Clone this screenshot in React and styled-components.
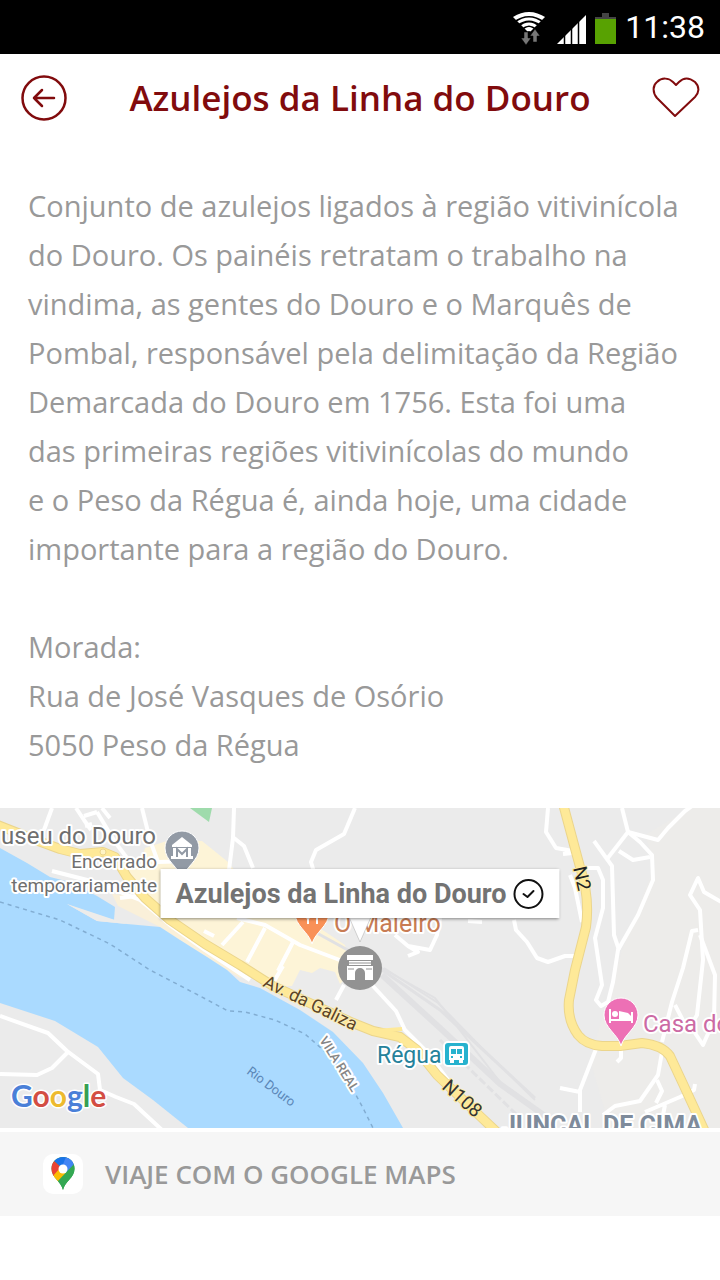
import React from "react"
import styled, { createGlobalStyle } from "styled-components"

const GlobalStyle = createGlobalStyle`
    * {
        box-sizing: border-box;
    }

    body {
        margin: 0;
        background: #fff;
        font-family: "Open Sans", "Noto Sans", sans-serif;
    }
`

const StatusBar = styled.div`
    display: flex;
    align-items: center;
    justify-content: flex-end;
    gap: 8px;
    height: 54px;
    padding: 0 15px;
    background: #000;
`

const Clock = styled.time`
    color: #fff;
    font: 400 32px/40px Roboto, sans-serif;
`

const Header = styled.header`
    display: flex;
    align-items: center;
    justify-content: space-between;
    min-height: 88px;
    padding: 0 20px;
`

const Title = styled.h1`
    margin: 0;
    color: #810b0d;
    font-size: 35px;
    font-weight: 600;
    line-height: 48px;
    text-align: center;
`

const IconButton = styled.button`
    display: flex;
    padding: 0;
    border: 0;
    background: none;
    color: #810b0d;
    cursor: pointer;
`

const Description = styled.section`
    padding: 39px 28px;
    color: #999;
    font-size: 29px;
    line-height: 49px;
`

const Paragraph = styled.p`
    margin: 0 0 49px;
`

const Address = styled.address`
    font-style: normal;
`

const MapArea = styled.section`
    position: relative;
    height: 320px;
    overflow: hidden;
    background: #ebebeb;
`

const MapDrawing = styled.svg`
    display: block;
    width: 100%;
    height: 100%;
    font-family: Roboto, sans-serif;
`

const Halo = styled.text`
    paint-order: stroke;
    stroke: ${props => props.$halo || "#fff"};
    stroke-width: ${props => props.$haloWidth || 4}px;
    stroke-linejoin: round;
`

const Callout = styled.button`
    position: absolute;
    top: 61px;
    left: 50%;
    transform: translateX(-50%);
    display: flex;
    align-items: center;
    gap: 6px;
    height: 49px;
    padding: 0 15px;
    border: 0;
    background: #fff;
    box-shadow: 0 1px 3px rgba(0, 0, 0, 0.45);
    color: #737373;
    font: 700 27px/32px Roboto, sans-serif;
    white-space: nowrap;
    cursor: pointer;
`

const MapsLink = styled.a`
    display: flex;
    align-items: center;
    gap: 22px;
    margin-top: 4px;
    height: 84px;
    padding: 0 43px;
    background: #f6f6f6;
    color: #999;
    font-size: 26px;
    font-weight: 600;
    text-decoration: none;
`

const MapsBadge = styled.span`
    display: flex;
    align-items: center;
    justify-content: center;
    width: 40px;
    height: 40px;
    border-radius: 10px;
    background: #fff;
`

function StatusIcons() {
    return (
        <svg width="104" height="54" viewBox="514 0 104 54" aria-hidden="true">
            <clipPath id="wifi">
                <path d="M530 33 L513 16 Q530 6 547 16Z" />
            </clipPath>
            <g clipPath="url(#wifi)" fill="none" stroke="#fff" strokeWidth="3">
                <path d="M513 20 Q530 8 547 20" strokeWidth="4" />
                <path d="M517 24 Q530 14 543 24" />
                <path d="M521 28 Q530 20 539 28" />
                <path d="M525 32 Q530 26 535 32" strokeWidth="4" />
            </g>
            <path d="M525 32h4v6h3l-5 7-5-7h3zM534 42v-6h-3l5-7 5 7h-3v6z" fill="#777" stroke="#000" strokeWidth="0.5" />
            <path d="M558 44 L587 15 V44Z" fill="#fff" />
            <path d="M565.500 34V45M572.500 27V45M579.500 20V45" stroke="#000" strokeWidth="1.500" />
            <path d="M603 13h7v4h7v3h-21v-3h7z" fill="#444" />
            <path d="M596 19h21v25h-21z" fill="#58a202" />
        </svg>
    )
}

const streets = [
    "M52 808 L44 830",
    "M76 808 L84 820 L91 830 M102 808 L110 818 M84 816 L97 812 M92 824 L85 826",
    "M97 812 L115 842 L130 862",
    "M142 808 L150 840 L158 862 L190 861",
    "M234 808 L233 838 L229 870",
    "M234 838 L244 846 L253 868",
    "M355 808 L344 834 L316 850 L311 862 L314 872",
    "M52 871 L95 882 L140 900 L170 925 L205 950 L250 980",
    "M120 898 L136 896",
    "M222 945 L243 922 M204 931 L214 936",
    "M237 918 L265 925 L300 945 L345 962",
    "M247 962 L265 928 M278 971 L293 942 M273 983 L283 966",
    "M336 1000 L344 985",
    "M372 985 L396 1011 L405 1030 L427 1052 L448 1080",
    "M0 1016 L48 1033 L67 1051 L98 1074 L100 1090 L116 1097 L134 1104 L162 1130",
    "M0 1074 L37 1075 L52 1068 L68 1052",
    "M395 935 L408 946 L430 950 L437 935 L440 918 M408 946 L418 952 L408 956",
    "M468 921 L482 922",
    "M548 808 L546 832 L556 848 L573 851 M563 854 L573 853",
    "M570 875 L575 888 L582 922",
    "M586 868 L598 868 L603 880 L603 908 L595 938 L602 985 L596 1000 L601 1006 L608 1002 L613 982 L618 950 L638 915 L653 880 L652 855 L640 842 L628 832 L622 808",
    "M594 841 L612 866 L614 935 L619 950",
    "M607 859 L628 832 M619 851 L633 860 L650 857",
    "M628 832 L658 840 L668 828 L685 811 L692 806",
    "M723 903 L704 892 L698 878 L690 895 L700 910 L703 960 L697 1015 L688 1030 L675 1005 M698 930 L692 931 L683 968 L672 1002 L662 1042",
    "M700 935 L715 975 L714 1020 L703 1045 L693 1030",
    "M514 920 L516 930 L527 942 L537 958 L548 962 L565 956 L577 956",
    "M596 1049 L580 1090 L580 1112 M560 1088 L580 1092",
    "M621 1050 L621 1058 L617 1062",
    "M662 1052 L658 1075 L640 1101 L615 1106 L603 1115",
    "M657 1080 L662 1091 L656 1103 M645 1112 L680 1097 L694 1090 L695 1084 M665 1105 L662 1120"
]

const mainRoads = [
    "M-5 824 L33 839 L60 849 L80 854 L103 852 L115 857 L127 877 L145 898 L170 920 L205 944 L240 965 L273 986 L353 1023 L373 1031 L400 1037 L417 1050 L437 1075 L482 1118 L500 1135",
    "M562 800 L580 867 Q590 897 586 927 L575 970 L569 1000 Q567 1020 578 1035 Q586 1045 602 1046 L620 1046 L642 1043 Q662 1045 670 1056 L684 1086 L707 1136"
]

function Roads() {
    return (
        <g fill="none" strokeLinejoin="round">
            <g stroke="#fff" strokeWidth="4">
                {streets.map(d => <path key={d} d={d} />)}
            </g>
            <g stroke="#ebd58c" strokeWidth="10">
                {mainRoads.map(d => <path key={d} d={d} />)}
            </g>
            <g stroke="#fee998" strokeWidth="8">
                {mainRoads.map(d => <path key={d} d={d} />)}
            </g>
            <path d="M375 1031 L402 1029" stroke="#fee998" strokeWidth="4" />
            <circle cx="103" cy="852" r="3" fill="#fff4c4" stroke="#ebd58c" />
        </g>
    )
}

function Pin({ x, y, color, children }) {
    return (
        <g transform={`translate(${x} ${y})`}>
            <path d="M0 30 C-3 18 -17 12 -17 -1 A17 17 0 0 1 17 -1 C17 12 3 18 0 30Z" fill={color} stroke="#fff" strokeWidth="1" />
            {children}
        </g>
    )
}

function TownMap() {
    return (
        <MapDrawing viewBox="0 808 720 320" preserveAspectRatio="xMidYMid slice" role="img" aria-label="Mapa de Peso da Régua">
            <rect y="808" width="720" height="320" fill="#ebebeb" />
            <path d="M610 1128 L590 1060 L622 950 L655 865 L645 835 L690 808 H720 V1128Z" fill="#edecea" />
            <path d="M145 848 L170 840 L202 841 L228 862 L250 890 L300 915 L345 945 L352 972 L340 984 L335 972 L320 968 L312 973 L300 970 L292 986 L265 986 L160 918 L125 866 L140 866Z" fill="#fdf4d7" />
            <path d="M112 894 L136 896 L210 948 L250 975 L240 978 L160 927 L118 906Z" fill="#faf0d9" />
            <path d="M190 808 L209 822 L212 808Z" fill="#9fdbac" />
            <path d="M0 848 L27 863 L50 877 L70 882 L97 896 L115 907 L114 920 L97 917 L67 904 L97 921 L127 924 L160 927 L180 940 L207 957 L227 970 L240 982 L260 988 L300 1010 L333 1032 L363 1063 L383 1093 L403 1128 H188 L153 1100 L123 1078 L98 1047 L55 1021 L0 1003Z" fill="#aadaff" />
            <path d="M67 904 L97 914 L115 920 L127 924 L97 921Z" fill="#edecea" />
            <path d="M0 902 L60 920 L110 944 L150 970 L200 996 L228 1011 L245 1012 L275 1020 L305 1034 L330 1056 L350 1084 L363 1108 L373 1128" fill="none" stroke="#82add2" strokeWidth="1.500" strokeDasharray="4 4" />

            <g fill="none" stroke="#e1e1e3">
                <path d="M315 932 L375 965 L440 1010 L535 1098" strokeWidth="3" />
                <path d="M380 967 L435 998 L500 1082" strokeWidth="2" />
                <path d="M382 975 L440 1028 L500 1084 L545 1116" strokeWidth="6" />
                <path d="M384 968 L438 1003 L478 1044 L535 1100" strokeWidth="2" />
                <path d="M440 1040 L520 1118" strokeWidth="3" strokeDasharray="8 3" />
            </g>

            <Roads />

            <Halo x="156" y="844" textAnchor="end" fontSize="24" fill="#6f6f6f">useu do Douro</Halo>
            <Halo x="157" y="868" textAnchor="end" fontSize="19" fill="#6f6f6f">Encerrado</Halo>
            <Halo x="157" y="892" textAnchor="end" fontSize="19" fill="#6f6f6f">temporariamente</Halo>
            <Halo x="334" y="932" fontSize="25" fill="#c87c54">O Maleiro</Halo>
            <Halo x="377" y="1063" fontSize="23" fill="#26829b">Régua</Halo>
            <Halo x="643" y="1032" fontSize="24" fill="#cc6aa4">Casa do</Halo>
            <Halo x="502" y="1134" fontSize="25" fontWeight="700" fill="#7e8b9b">JUNCAL DE CIMA</Halo>
            <Halo transform="translate(262 986) rotate(26)" $halo="#fbeebc" $haloWidth={2} fontSize="18" fill="#5c4425">Av. da Galiza</Halo>
            <Halo transform="translate(319 1040) rotate(58)" fontSize="13" fontWeight="500" fill="#858585">VILA REAL</Halo>
            <text transform="translate(246 1073) rotate(37)" fontSize="13" fill="#5b87b8">Rio Douro</text>
            <Halo transform="translate(441 1088) rotate(42)" $halo="#feeba0" $haloWidth={2} fontSize="19" fill="#333">N108</Halo>
            <Halo transform="translate(573 868) rotate(77)" $halo="#feeba0" $haloWidth={2} fontSize="19" fill="#222">N2</Halo>

            <Pin x={182} y={849} color="#929aa5">
                <path d="M-10 -4 L0 -12 L10 -4 V-2 H-10Z M-9 -1h18v10h-18z M-11 7h22v3h-22z" fill="#fff" />
                <path d="M-5 8V0L0 5L5 0V8" fill="none" stroke="#929aa5" strokeWidth="2" />
            </Pin>
            <Pin x={312} y={914} color="#f99157">
                <path d="M-6 -6V2Q-4 6 -2 2V-6M-4 2V10M5 -6V10M5 2H1V-6" stroke="#fff" strokeWidth="2" fill="none" />
            </Pin>
            <Pin x={621} y={1016} color="#ed70b5">
                <path d="M-11 -7V7M-11 4H11M11 -4V7" stroke="#fff" strokeWidth="2" />
                <circle cx="-6" cy="-2" r="3" fill="#fff" />
                <path d="M-2 2V-5L7 -3L10 0V3H-2Z" fill="#fff" />
            </Pin>

            <rect x="444" y="1042" width="25" height="24" rx="4" fill="#27b2ce" stroke="#fff" strokeWidth="2" />
            <path d="M449 1048Q449 1046 451 1046H462Q464 1046 464 1048V1060H449Z M450 1060h4v3h-4z M459 1060h4v3h-4z" fill="#fff" />
            <path d="M451 1049h5v5h-5z M457 1049h5v5h-5z M451 1056h2v2h-2z M460 1056h2v2h-2z" fill="#27b2ce" />

            <circle cx="360" cy="968" r="22" fill="#929292" />
            <path d="M347 955h26v5h-26z M349 961h22v4h-22z M347 966h26v14h-8v-7a5 5 0 0 0-10 0v7h-8z" fill="#fff" />
            <path d="M348 969h6M366 969h6M349 963h22" stroke="#929292" strokeWidth="1" />

            <path d="M349 917 L360 942 L371 917Z" fill="#fff" stroke="#aaa" strokeWidth="0.500" />

            <Halo x="11" y="1107" $haloWidth={3} fontFamily="Lato" fontSize="30" fontWeight="700">
                <tspan fill="#4a80d8">G</tspan>
                <tspan fill="#d34d43">o</tspan>
                <tspan fill="#edba2e">o</tspan>
                <tspan fill="#4a80d8">g</tspan>
                <tspan fill="#36a052">l</tspan>
                <tspan fill="#d34d43">e</tspan>
            </Halo>
        </MapDrawing>
    )
}

function MapsLogo() {
    return (
        <svg width="24" height="34" viewBox="0 0 24 34" aria-hidden="true">
            <clipPath id="maps-pin">
                <path d="M12 0 A11.500 11.500 0 0 1 23.500 12 C23.500 21 14 24 12 33 C10 24 0.500 21 0.500 12 A11.500 11.500 0 0 1 12 0Z" />
            </clipPath>
            <g clipPath="url(#maps-pin)">
                <rect width="24" height="34" fill="#34a853" />
                <path d="M0 0H24V5L12 12L3 4Z" fill="#1a73e8" />
                <path d="M15 0L24 0V7L14 17L10 12Z" fill="#4285f4" />
                <path d="M3 4L12 12L2 21H-2V0Z" fill="#ea4335" />
                <path d="M1 20L10 10L16 16L5 27Z" fill="#fbbc04" />
                <path d="M24 7V34H10L5 26L24 6Z" fill="#34a853" />
            </g>
            <circle cx="12" cy="12" r="4.500" fill="#fff" />
        </svg>
    )
}

function App() {
    return (
        <>
            <GlobalStyle />
            <StatusBar>
                <StatusIcons />
                <Clock>11:38</Clock>
            </StatusBar>
            <Header>
                <IconButton aria-label="Voltar">
                    <svg width="48" height="48" viewBox="0 0 48 48" fill="none" stroke="currentColor" strokeWidth="2.500" strokeLinecap="round" strokeLinejoin="round">
                        <circle cx="24" cy="24" r="21.500" />
                        <path d="M34 24H14M22 16L14 24L22 32" />
                    </svg>
                </IconButton>
                <Title>Azulejos da Linha do Douro</Title>
                <IconButton aria-label="Favorito">
                    <svg width="48" height="48" viewBox="0 0 48 48" fill="none" stroke="currentColor" strokeWidth="2" strokeLinejoin="round">
                        <path d="M23 42 L5 24 C0 18 1 11 5 8 C10 3 17 4 21 8 L24 11 L27 8 C32 3 38 4 43 8 C48 13 47 19 43 23Z" />
                    </svg>
                </IconButton>
            </Header>
            <main>
                <Description>
                    <Paragraph>
                        Conjunto de azulejos ligados à região vitivinícola do Douro. Os painéis retratam o trabalho na vindima, as gentes do Douro e o Marquês de Pombal, responsável pela delimitação da Região Demarcada do Douro em 1756. Esta foi uma das&nbsp;primeiras regiões vitivinícolas do mundo e&nbsp;o&nbsp;Peso da Régua é, ainda hoje, uma cidade importante para a região do Douro.
                    </Paragraph>
                    <Address>
                        Morada:<br />
                        Rua de José Vasques de Osório<br />
                        5050 Peso da Régua
                    </Address>
                </Description>
                <MapArea>
                    <TownMap />
                    <Callout>
                        Azulejos da Linha do Douro
                        <svg width="32" height="32" viewBox="0 0 32 32" fill="none" stroke="#111" strokeWidth="2" strokeLinecap="round" strokeLinejoin="round" aria-hidden="true">
                            <circle cx="16" cy="16" r="14" />
                            <path d="M11 16L15 19L21 13" />
                        </svg>
                    </Callout>
                </MapArea>
                <MapsLink href="#maps">
                    <MapsBadge>
                        <MapsLogo />
                    </MapsBadge>
                    VIAJE COM O GOOGLE MAPS
                </MapsLink>
            </main>
        </>
    )
}

export default App
